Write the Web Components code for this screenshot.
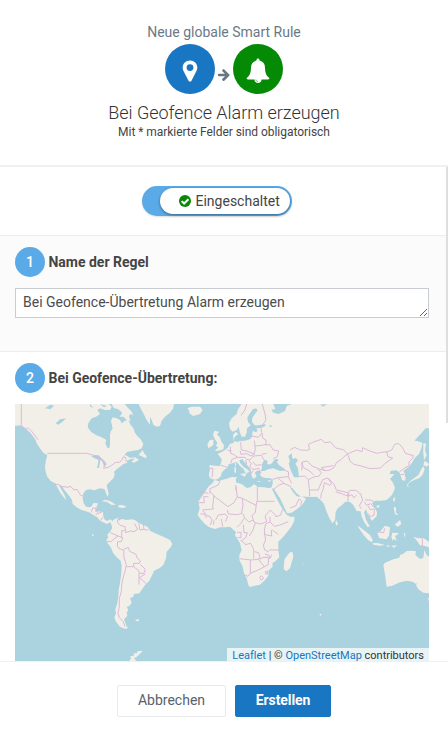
<!DOCTYPE html>
<html lang="de">
<head>
<meta charset="utf-8">
<title>Smart Rule</title>
<style>
html,body{margin:0;height:100%;overflow:hidden}
body{font:14px/20px Roboto,"Liberation Sans",sans-serif;color:#444;background:#fff}
</style>
</head>
<body>
<rule-dialog></rule-dialog>
<script>
function define(name, html) {
  const t = document.createElement('template');
  t.innerHTML = html;
  customElements.define(name, class extends HTMLElement {
    constructor() {
      super();
      this.attachShadow({mode: 'open'}).append(t.content.cloneNode(true));
    }
  });
}

define('icon-disc', `<style>
:host{display:grid;place-items:center;box-sizing:border-box;padding-top:3px;width:50px;height:50px;border-radius:50%;background:var(--disc,#1976c2)}
</style><slot></slot>`);

define('rule-header', `<style>
:host{display:flex;flex-direction:column;align-items:center;box-sizing:border-box;height:167px;padding-top:22px;border-bottom:2px solid #f0f0f0;background:#fff}
.kicker{color:#6a7985;line-height:20px}
.icons{display:flex;align-items:center;height:50px;margin-top:2px;gap:3px}
.arrow{margin-top:11px}
svg{display:block;fill:#fff}
.arrow{fill:#687782}
h1{margin:8px 0 0;font-size:18px;line-height:22px;font-weight:300;color:#333;letter-spacing:-.03px}
p{margin:-1px 0 0;font-size:12px;line-height:18px;letter-spacing:-.04px}
</style>
<div class="kicker">Neue globale Smart Rule</div>
<div class="icons">
<icon-disc><svg width="16" height="24" viewBox="0 0 16 24"><path fill-rule="evenodd" d="M8 1.500c4.100 0 7.300 2.900 7.300 7 0 1.500-.4 2.500-.9 3.500l-4.900 9.700c-.6 1.200-2.400 1.200-3 0L1.500 12C1 11 .7 10 .7 8.500c0-4.100 3.200-7 7.300-7zm0 3.700a3.400 3.400 0 1 0 0 6.800 3.400 3.400 0 0 0 0-6.800z"/></svg></icon-disc>
<svg class="arrow" width="12" height="12" viewBox="0 0 12 12"><path d="M.5 4.800h6.400L4.400 2.300Q3.800 1.500 4.400.9l.5-.5q.7-.7 1.400 0l5 5q.6.600 0 1.300l-5 5q-.7.600-1.400 0l-.6-.6q-.5-.7.100-1.300l2.600-2.600H.7Q0 7.200 0 6.500v-1q0-.7.500-.7z"/></svg>
<icon-disc style="--disc:#058a05"><svg width="24" height="26" viewBox="0 0 24 26"><path d="M12 .6c1 0 1.500.6 1.500 1.500v.5c3.600.8 5.500 3.300 5.500 7.100 0 5 1.300 8.100 4.300 10.200.2.600-.2 1.500-1.300 1.500h-6.500c0 2-1.500 3.500-3.500 3.500s-3.500-1.500-3.500-3.500H2c-1.100 0-1.500-.9-1.300-1.500C3.700 17.800 5 14.700 5 9.700c0-3.800 1.900-6.300 5.500-7.100v-.5C10.500 1.200 11 .6 12 .6z"/><path d="M9.900 21.500c.1 1.300.9 2.200 2.200 2.200" fill="none" stroke="#058a05" stroke-width=".6"/></svg></icon-disc>
</div>
<h1>Bei Geofence Alarm erzeugen</h1>
<p>Mit * markierte Felder sind obligatorisch</p>`);

define('rule-toggle', `<style>
:host{display:block;box-sizing:border-box;width:150px;height:30px;padding:2px 2px 2px 18px;border-radius:15px;background:#5aaae8;box-shadow:0 1px 2px #0002}
div{display:flex;align-items:center;gap:5px;height:26px;box-sizing:border-box;padding-left:19px;border-radius:13px;background:#fff;box-shadow:0 1px 3px #0006}
svg{display:block}
</style><div><svg width="12" height="12" viewBox="0 0 12 12"><circle cx="6" cy="6" r="6" fill="#078807"/><path d="M2.700 6.100 5.100 8.500 9.400 4.200" fill="none" stroke="#fff" stroke-width="2"/></svg><span><slot></slot></span></div>`);

define('rule-step', `<style>
:host{display:block;box-sizing:border-box;padding:11px 16px 0 15px;border-top:1px solid #ededed}
header{display:flex;align-items:center;gap:3.500px;height:30px;font-weight:700;letter-spacing:-.01px}
.n{display:grid;place-items:center;width:30px;height:30px;border-radius:50%;background:#5aaae8;color:#fff;font-weight:500}
</style><header><span class="n"><slot name="n"></slot></span><slot name="title"></slot></header><slot></slot>`);

define('rule-name', `<style>
:host{display:block;margin-top:11px;padding-right:1px}
textarea{display:block;box-sizing:border-box;width:414px;height:30px;margin:0;padding:3px 7px;border:1px solid #c9cdd1;border-radius:0;background:#fff;color:#4c4c4c;font:14px/20px Roboto,sans-serif;overflow:hidden;resize:vertical;outline:0}
</style><textarea rows="1">Bei Geofence-Übertretung Alarm erzeugen</textarea>`);

define('world-map', `<style>
:host{display:grid;width:414px;height:257px;margin-top:11px;background:#abd3df;overflow:hidden}
svg,.credit{grid-area:1/1}
svg{display:block}
.land{fill:#f2efe9}.sea{fill:#abd3df}.b{fill:none;stroke:#dab5d7;stroke-width:2.800;stroke-linejoin:round}
.credit{align-self:end;justify-self:end;height:13px;box-sizing:border-box;padding:0 5px;background:#ffffffb8;font-size:11px;line-height:15px;color:#333;white-space:nowrap;letter-spacing:-.005px}
a{color:#1776bf}
</style>
<svg width="414" height="257" viewBox="15 404 414 257">
<g transform="translate(10 400) scale(.33333)">
<path class="land" d="M15 12V78L30 76 40 82 52 90 62 100 72 115 80 130 90 145 100 158 112 166 108 180 105 200 107 215 112 230 122 243 135 250 142 262 150 277 160 290 169 301 165 288 158 275 150 262 148 255 155 258 165 272 178 288 186 300 188 312 200 322 215 330 228 334 240 338 250 345 262 352 270 362 280 367 292 372 300 366 306 374 308 364 300 358 292 363 285 360 280 350 279 336 262 334 255 335 258 325 264 310 250 309 246 318 240 322 228 320 221 310 218 295 220 280 228 270 240 268 255 271 262 267 272 265 284 268 288 280 292 290 296 282 292 265 290 255 300 245 310 235 314 225 312 215 320 208 330 200 340 192 352 188 350 182 360 178 375 175 365 185 372 188 387 180 380 175 375 172 360 174 352 168 345 165 338 170 352 155 370 152 385 150 395 145 400 132 392 118 382 108 375 98 370 85 362 75 355 60 345 62 335 70 330 60 320 55 308 52 303 62 308 85 302 95 300 105 300 130 298 145 292 143 286 130 289 120 275 112 258 105 243 95 233 82 235 70 245 55 258 50 270 42 262 30 270 25 285 30 300 30 305 20 296 12ZM305 12H344L355 25 364 34 370 46 360 42 357 50 362 63 350 60 340 50 329 50 337 38 325 28 311 24ZM386 12H420V75L410 60 400 40 390 22ZM386 165 398 150 402 160 410 168 408 175 398 170ZM275 304 285 299 300 303 318 314 305 315 290 305ZM325 316 336 315 350 320 340 324 325 322Z"/>
<path class="sea" d="M105 25 121 14 132 17 121 28ZM137 70 150 58 168 55 158 65 145 74ZM243 168 265 165 277 177 285 184 290 193 283 200 276 182 271 180 267 204 261 204 266 180 252 174ZM240 12 250 24 240 20ZM270 12 282 22 291 18ZM60 98 77 120 81 142 72 132 66 113Z"/>
<path class="b" d="M34 12V76L48 88 54 83 65 94 84 119M112 160H230L248 165 264 170 277 180 284 191 281 205 297 201 305 196 316 187 328 187 337 179 339 171 347 172 348 185M135 252 148 255 155 259 175 262 181 258 192 270 201 268 208 280 212 286 219 288M244 337 248 324H258V332L265 338M257 343 276 336M278 352 272 362"/>
</g>
<g transform="translate(10 530) scale(.33333)">
<path class="land" d="M303-18 310-30 325-38 326-28 335-33 350-30 365-32 375-30 385-22 400-15 412-10 418-2 420 2 435 10 460 20 480 30 487 42 482 52 470 65 468 85 460 105 448 115 432 122 428 132 418 152 405 165 395 180 388 190 372 192 370 200 360 205 365 218 358 228 350 230 355 240 350 248 352 258 342 268 346 278 350 290 355 293 345 297 330 290 318 275 313 262 318 250 316 238 322 220 325 200 326 180 330 160 334 130 335 108 332 92 320 82 310 70 302 52 292 38 289 30 295 22 292 14 300 5 306-5 306-12ZM357 393 363 386 361 379 372 377 371 370 381 370 382 364 399 362 390 371 379 382 372 384 379 393ZM376 269 388 268 386 274 378 273ZM246 13 251 14 250 18 246 17Z"/>
<path class="b" d="M301 8 315 14 325 18 312 27 303 35 291 34M325 18 338 24 334 35 323 35 322 48 327 56 341 60 342 82 349 104 346 120 339 145 335 165 334 185 328 205 328 230 324 250 328 263 340 275 345 290M341 58 355 52 359 64 377 72 382 85 391 92 388 100H371V110H349M371 110 386 122 387 130 402 130 406 118 391 103M387 132 387 164M406 132 388 143 409 161M325-38 322-24 330-14 345-10 347 3 335 2V24M345 8 362 3 372 5 383-2 373-20M386-20 390 0 402-2 400-17M402-1 415 0"/>
</g>
<g transform="translate(150 400) scale(.33333)">
<path class="land" d="M0 12H72L70 25 60 38 45 50 35 62 30 78 20 80 10 74 5 60 0 50ZM112 25 125 20 150 20 158 30 150 42 130 48 118 40 118 32ZM193 92 207 95 201 104 210 112 214 125 222 135 220 148 205 152 194 153 205 142 198 138 202 128 195 118 189 105ZM180 120 190 119 190 135 175 145 172 132ZM270 222 288 220 285 231ZM253 202 258 202 258 219 253 217ZM255 190 258 188 258 198 255 197ZM318 243 332 243 330 246ZM353 242 365 239 358 246Z"/>
<path class="land" d="M275 12 264 28 260 42 245 55 237 70 240 87 248 95 260 90 266 80 269 96 275 110 285 110 290 98 291 85 302 76 294 66 292 52 300 40 308 28 318 25 323 31 315 42 307 53 306 65 314 76 325 76 347 72 345 79 333 84 319 85 323 92 318 97 308 93 306 110 300 118 285 122 272 123 260 126 251 122 254 111 265 101 257 96 249 105 252 128 240 132 232 145 225 150 215 156 203 161 208 168 215 178 213 190 210 198 195 197 178 195 180 210 176 225 180 235 195 239 205 236 213 228 215 218 223 209 233 202 236 193 248 190 260 186 270 198 280 206 287 218 284 226 292 218 299 215 291 207 280 200 270 188 268 181 276 177 288 191 300 205 303 220 308 235 315 235 320 227 314 220 319 213 332 212 336 205 335 194 341 183 349 179 353 186 351 193 362 193 368 187 375 177 386 178 381 186 386 194 403 206 406 211 390 213 370 205 355 208 345 212 332 214 330 225 337 232 348 234 357 234 368 237 368 250 365 262 357 265 343 262 325 261 312 253 301 262 290 264 275 252 259 248 257 238 262 232 245 231 230 236 215 240 207 244 193 240 187 250 175 260 165 275 155 290 145 305 149 325 143 345 152 358 165 372 178 382 195 387 210 382 225 382 240 380 250 389 258 396 255 405 262 416 270 430 275 450 268 465 268 480 278 500 282 520 290 535 295 555 300 561 315 557 330 554 345 540 355 527 356 511 368 500 367 490 378 482 388 472 385 450 385 425 400 410 412 395 424 380 433 362 433 350 421 350 410 344 397 326 385 305 372 280 366 267 370 264 379 278 390 295 401 318 411 340 425 338 440 328 455 316 462 307 468 296 455 289 447 290 440 289 429 276 420 262 427 264 439 279 451 289 466 290 485 291 500 290 512 300 522 312 528 330 537 352 547 370 555 361 557 335 564 324 577 314 586 305 600 306 610 315 620 333 632 334 635 350 643 367 653 382 659 379 648 359 642 337 648 328 654 344 659 352 666 362 680 349 681 336 671 319 666 309 675 302 692 302 710 300 726 285 735 265 729 248 720 237 728 228 733 222 719 222 722 212 740 211 750 220 756 240 763 243 767 237 764 220 760 213 775 202 785 190 795 173 807 162 815 142 817 129 803 123 793 122 811 103 827 85 837 85V12H425L410 18 405 33 386 42 370 38 364 29 376 28 370 12Z"/>
<path class="sea" d="M424 178 438 174 444 181 436 191 444 204 447 232 432 232 422 211 416 190ZM415 168 425 160 428 180 420 185ZM510 14 530 12 520 20ZM355 78 365 75 364 82Z"/>
<path class="land" d="M559 361 564 372 559 377 556 368ZM680 317 689 315 687 323 680 322ZM730 294 736 292 734 304 729 304ZM820 129 828 131 825 150 830 166 822 181 820 160ZM824 182 838 193 829 200 820 194ZM820 198 824 208 818 224 807 235 794 239 780 247 770 258 779 262 771 254 781 243 797 231 806 224 812 211ZM731 322 738 322 738 338 746 346 735 343ZM734 374 750 360 754 372 744 380ZM402 492 404 478 418 458 427 455 430 470 420 505 409 514 401 507Z"/>
<path class="b" d="M337 12 345 42 348 60 338 75M273 46 285 30 290 12M306 108 325 112 336 99 338 114 348 120 348 133 335 136 315 138 313 122M333 85 335 98M315 138 316 150 311 161 290 153 274 150 272 126M241 140 242 160 252 164 263 172 246 178 242 190M232 150 244 153M270 152 273 163 290 161 303 168 315 161M263 172 285 172 290 178 300 180 311 168 334 166 344 183M287 180 290 193M296 183 304 190 300 200 308 208 330 206M309 185 317 196 334 194M300 208 304 220 310 212M346 135 360 134 370 150 386 153 382 170 370 176M349 160 336 163M180 205 189 205 186 232M213 196 233 202M333 221 326 210M398 208 416 216 415 230 385 233 369 238M415 230 425 250M210 242 205 255 180 266 180 280M150 275 175 280M180 276 192 286 188 318 190 327 157 330M190 287 234 320 252 308 262 291 257 255M256 270 260 260M262 291 277 295 318 316M322 260V304H374M320 304 316 338 306 346 311 363M277 295 279 315 275 340 262 344 235 342 232 330M145 308H163L161 290H175M151 342H163L170 354M158 332 170 346 180 350 186 360 181 375M192 361 190 374M197 360 205 345 225 342 233 350 226 365M214 357 218 380M278 341 284 352 273 370 261 382M284 354 297 366 307 361 316 368 331 372 350 365 345 348 354 338 361 330 376 345 378 350 391 346 398 328M360 350 360 366 373 379 390 375 415 365M360 365 347 372 343 390 344 402M316 368 309 390 298 408M280 374 282 398 292 398 288 412 276 421M261 397H273V413H262M271 421 281 427 286 434 302 430 311 448 311 476M268 476 303 480 325 478 330 470 325 458 314 455M343 398 347 420 340 436 344 450 357 456M346 404 365 408 364 390M367 390 385 404M357 450H388M345 462 357 466 360 476 365 464M326 478 341 472 355 472 355 494 343 500 327 480M301 481 301 520 320 512 343 501M283 524 294 529 301 520M329 532 334 527 341 534 334 541ZM347 514H353V522H347Z"/>
<path class="b" d="M420 150 434 142 450 150 470 151 479 148 475 133 488 127 514 118 525 128 542 126 557 144 580 149 593 162 582 170 572 180 560 187 552 203 540 210 525 212 514 203 550 197M455 211 457 186 472 183 486 198 510 208 526 212M455 187 460 203 479 213 492 226M448 230 464 228 475 239 494 230 506 229 514 218 504 207M475 239 478 268 479 289M480 270 505 270 512 252 518 239 534 234 552 253 559 270 594 278 600 271 616 271 622 273 630 283 634 280M534 234 544 250 540 256 523 248 519 270 514 280 512 295M557 275 594 288 597 279M594 278V306M594 289 606 284 611 293 620 286M593 162 620 150 636 155 638 143 657 152 680 160 695 157 710 155 714 170 728 174 704 191 692 204 660 206 630 197 612 193 600 183 594 164M710 157 725 150 735 132 747 131 759 145 766 160 790 167 787 176 777 186 777 197 763 205 748 216M752 223 763 224M385 235 402 250 423 260M370 270 385 256 402 250M420 324 437 318 447 297 455 303 452 316M632 283 638 300 628 317 634 326M643 306 650 316 662 311 674 324M645 300 660 300 671 304M655 317 660 329 673 327 672 346 659 350 655 341"/>
</g>
<g transform="translate(290 530) scale(.33333)">
<path class="land" d="M202-13 208-10 225 3 240 15 248 29 246 37 234 30 221 15ZM247 40 262 39 285 45 270 47 250 44ZM262 8 272 3 285-13 300-8 297 17 289 28 268 24ZM307 8 325 9 322 15 315 17 320 34 311 26 308 33 304 20ZM370 20 385 25 400 24 417 35V52L405 48 390 46 382 34ZM288 46 304 48 292 50ZM305 47 322 46 312 53 308 51ZM341 11 346 9 345 24ZM280 105 285 98 310 88 328 83 330 75 340 71 350 63 365 62 378 64 376 75 390 87 400 84 403 60 410 75 417 80V190L400 188 385 178 375 160 368 155 350 152 330 157 305 168 290 170 286 140ZM414 204 417 204V215ZM88 252 95 252 92 258ZM38 101 44 100 40 103Z"/>
<path class="sea" d="M372 164 380 158 378 169 385 174Z"/>
<path class="b" d="M397 23V50M263 6 281 8 284-5"/>
</g>
</svg>
<div class="credit"><a>Leaflet</a> | © <a>OpenStreetMap</a> contributors</div>`);

define('rule-button', `<style>
:host{display:grid;place-items:center;box-sizing:border-box;height:32px;border:1px solid #e8eaeb;border-radius:2px;color:#56636d;background:#fff;padding-bottom:2px}
:host([primary]){background:#1976c2;border-color:#1976c2;color:#fff;font-weight:700;letter-spacing:-.1px}
</style><span><slot></slot></span>`);

define('rule-dialog', `<style>
:host{display:flex;flex-direction:column;width:448px;height:740px;background:#fff}
main{height:494px;display:grid;grid-template-columns:1fr 3px;overflow:hidden}
.top{display:flex;justify-content:center;height:68px;padding:19px 11px 0 0;box-sizing:border-box}
.top rule-toggle{margin-right:2px}
.bar{height:258px;margin-top:-2px;background:#dedede;z-index:1}
.name{height:116px;background:#fbfbfb}
footer{display:flex;justify-content:center;gap:9px;height:79px;box-sizing:border-box;padding-top:23px;border-top:1px solid #f0f0f0}
.cancel{width:109px}.create{width:96px}
</style>
<rule-header></rule-header>
<main><div>
<div class="top"><rule-toggle>Eingeschaltet</rule-toggle></div>
<rule-step class="name"><span slot="n">1</span><span slot="title">Name der Regel</span><rule-name></rule-name></rule-step>
<rule-step><span slot="n">2</span><span slot="title">Bei Geofence-Übertretung:</span><world-map></world-map></rule-step>
</div><div class="bar"></div></main>
<footer><rule-button class="cancel">Abbrechen</rule-button><rule-button class="create" primary>Erstellen</rule-button></footer>`);
</script>
</body>
</html>
